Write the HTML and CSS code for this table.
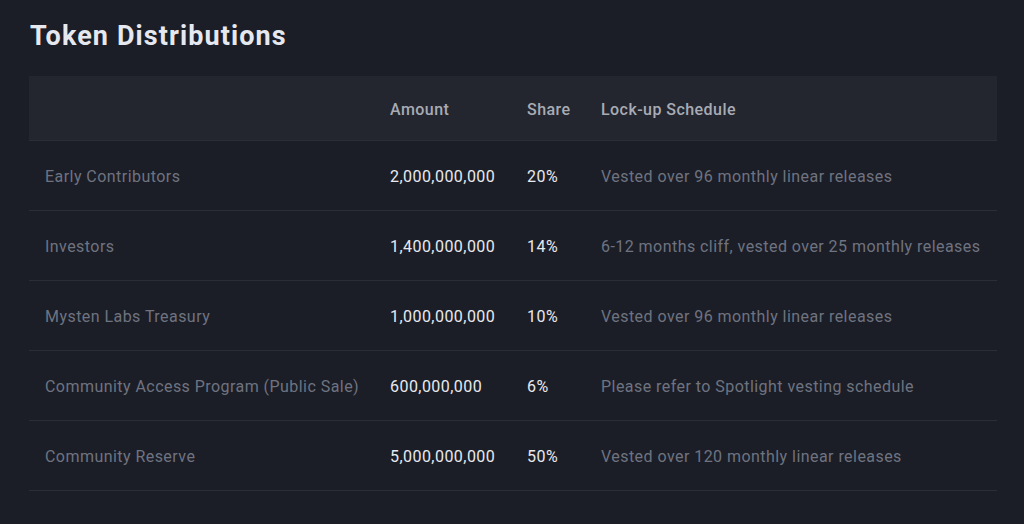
FILE: index.html
```html
<!doctype html>
<html>
	<head>
		<title>Token Distributions</title>
		<link rel="stylesheet" href="styles.css">
	</head>
	<body>
		<h2 class='heading'>Token Distributions</h2>
		<table class='dist'>
			<colgroup>
				<col class='c-name'>
				<col class='c-amount'>
				<col class='c-share'>
				<col>
			</colgroup>
			<thead>
				<tr>
					<th></th>
					<th>Amount</th>
					<th>Share</th>
					<th>Lock-up Schedule</th>
				</tr>
			</thead>
			<tbody>
				<tr>
					<td>Early Contributors</td>
					<td class='num'>2,000,000,000</td>
					<td class='num'>20%</td>
					<td>Vested over 96 monthly linear releases</td>
				</tr>
				<tr>
					<td>Investors</td>
					<td class='num'>1,400,000,000</td>
					<td class='num'>14%</td>
					<td>6-12 months cliff, vested over 25 monthly releases</td>
				</tr>
				<tr>
					<td>Mysten Labs Treasury</td>
					<td class='num'>1,000,000,000</td>
					<td class='num'>10%</td>
					<td>Vested over 96 monthly linear releases</td>
				</tr>
				<tr>
					<td>Community Access Program (Public Sale)</td>
					<td class='num'>600,000,000</td>
					<td class='num'>6%</td>
					<td>Please refer to Spotlight vesting schedule</td>
				</tr>
				<tr>
					<td>Community Reserve</td>
					<td class='num'>5,000,000,000</td>
					<td class='num'>50%</td>
					<td>Vested over 120 monthly linear releases</td>
				</tr>
			</tbody>
		</table>
	</body>
</html>
```

FILE: styles.css
```css
body {
	margin : 0;
	padding : 18px 27px 0 29px;
	background-color : #1b1e27;
	font-family : Roboto, "Liberation Sans", sans-serif;
	color : #6f7380;
}
h2.heading {
	margin : 0 0 22px 1px;
	font-size : 27px;
	line-height : 36px;
	font-weight : 700;
	letter-spacing : 1.1px;
	color : #e6e8f0;
}
table.dist {
	width : 100%;
	border-collapse : collapse;
	table-layout : fixed;
	font-size : 16px;
	letter-spacing : 0.45px;
}
col.c-name {
	width : 361px;
}
col.c-amount {
	width : 137px;
}
col.c-share {
	width : 74px;
}
thead tr {
	background-color : #23262f;
}
th {
	height : 62px;
	padding : 2px 0 0 0;
	text-align : left;
	font-weight : 500;
	color : #a8abb4;
}
td {
	height : 68px;
	padding : 1px 0 0 0;
	border-top : 1px solid #2b2e38;
	white-space : nowrap;
}
tbody tr:last-child td {
	border-bottom : 1px solid #2b2e38;
}
th:first-child,
td:first-child {
	padding-left : 16px;
}
td.num {
	color : #e8e9ee;
}
```
